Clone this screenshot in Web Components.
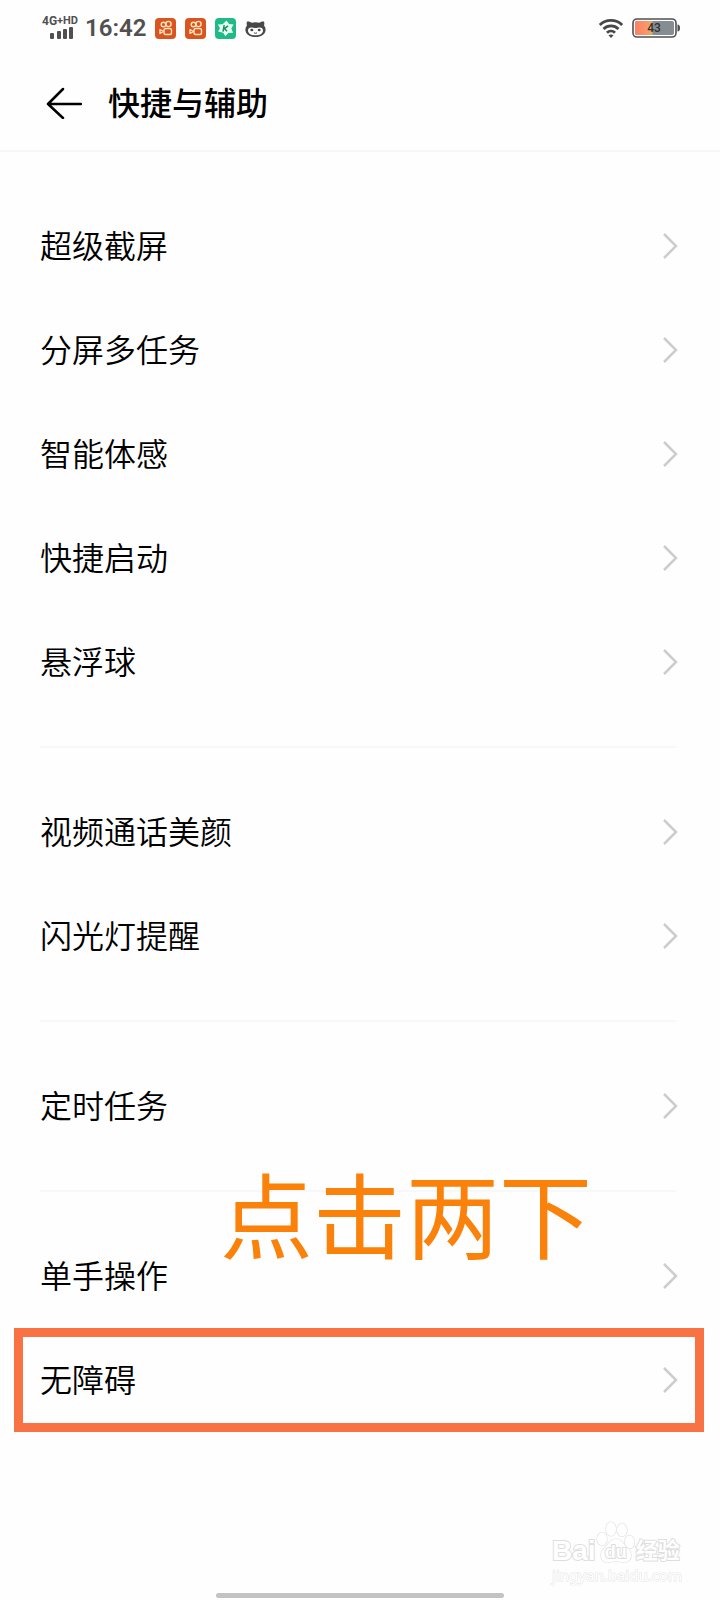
<!DOCTYPE html>
<html lang="zh-CN">
<head>
<meta charset="utf-8">
<meta name="viewport" content="width=device-width, initial-scale=1">
<title>快捷与辅助</title>
<style>
  body {
    margin: 0;
    background: #fefefe;
    color: #000;
    font-family: "Noto Sans CJK SC", sans-serif;
  }
</style>
</head>
<body>
<settings-screen>
  <status-bar slot="status" time="16:42" battery="43"></status-bar>
  <title-bar slot="header">快捷与辅助</title-bar>

  <settings-group>
    <settings-row>超级截屏</settings-row>
    <settings-row>分屏多任务</settings-row>
    <settings-row>智能体感</settings-row>
    <settings-row>快捷启动</settings-row>
    <settings-row>悬浮球</settings-row>
  </settings-group>
  <settings-group>
    <settings-row>视频通话美颜</settings-row>
    <settings-row>闪光灯提醒</settings-row>
  </settings-group>
  <settings-group>
    <settings-row>定时任务</settings-row>
  </settings-group>
  <settings-group>
    <hint-note slot="note">点击两下</hint-note>
    <settings-row>单手操作</settings-row>
    <settings-row highlighted>无障碍</settings-row>
  </settings-group>

  <site-watermark slot="overlay"></site-watermark>
</settings-screen>

<script>
class SettingsScreen extends HTMLElement {
  constructor() {
    super();
    this.attachShadow({ mode: 'open' });
  }

  connectedCallback() {
    this.shadowRoot.innerHTML = `
      <style>
        :host {
          display: flex;
          flex-direction: column;
          position: relative;
          min-height: 100vh;
        }
        main { padding-top: 10px; }
        .home {
          width: 40%;
          height: 5px;
          margin: auto auto 2px;
          border-radius: 3px;
          background: #c3c3c3;
        }
      </style>
      <slot name="status"></slot>
      <slot name="header"></slot>
      <main><slot></slot></main>
      <slot name="overlay"></slot>
      <div class="home"></div>
    `;
  }
}

class StatusBar extends HTMLElement {
  constructor() {
    super();
    this.attachShadow({ mode: 'open' });
  }

  connectedCallback() {
    const time = this.getAttribute('time') || '';
    const battery = this.getAttribute('battery') || '0';

    // Both short-video apps use the same camera glyph
    const camera = `
      <svg width="21" height="21" viewBox="0 0 21 21">
        <rect width="21" height="21" rx="4" fill="#d9541e"/>
        <g fill="none" stroke="#ffe3bd" stroke-width="1.4">
          <circle cx="8.5" cy="6.500" r="2.300"/>
          <circle cx="13.500" cy="6" r="2.600"/>
          <rect x="9" y="10.500" width="7.500" height="6" rx="1.800"/>
          <path d="M8.500 13.500 5 11.500v4z" stroke-linejoin="round"/>
        </g>
      </svg>`;

    this.shadowRoot.innerHTML = `
      <style>
        :host {
          display: flex;
          align-items: center;
          justify-content: space-between;
          height: 56px;
          padding: 0 40px 0 42px;
          color: #505050;
          font-family: Roboto, sans-serif;
        }
        .side { display: flex; align-items: center; }
        .left { gap: 9px; }
        .right { gap: 8px; }
        .network { width: 34px; font-size: 12px; line-height: 12px; font-weight: 700; white-space: nowrap; }
        .network sup { font-size: 11px; line-height: 0; vertical-align: 1px; }
        .network svg { display: block; margin: 0 0 2px 8px; }
        time { font-size: 24px; line-height: 28px; font-weight: 600; }
        svg { display: block; }
        .battery { display: grid; align-items: center; }
        .battery > * { grid-area: 1 / 1; }
        .level { width: 44px; text-align: center; font-size: 12px; line-height: 20px; font-weight: 500; color: #33302e; }
      </style>
      <div class="side left">
        <div class="network">
          4G<sup>+HD</sup>
          <svg width="25" height="12" viewBox="0 0 25 12" fill="#505050">
            <rect x="0" y="6" width="4" height="6" rx="1"/>
            <rect x="7" y="4" width="4" height="8" rx="1"/>
            <rect x="13" y="2" width="4" height="10" rx="1"/>
            <rect x="19" y="0" width="4" height="12" rx="1"/>
          </svg>
        </div>
        <time>${time}</time>
        ${camera}
        ${camera}
        <svg width="21" height="21" viewBox="0 0 21 21">
          <rect width="21" height="21" rx="4" fill="#1fba87"/>
          <path d="M11.500 2.500 14 6l4.500.5-2.200 4 1.800 4.200-4.800.3-3 3.300-2.100-3.600L3 13.500l2-3.300L2.800 6.500l4.900-.3z" fill="#e4fff0"/>
          <path d="M9.200 7.200 8 13.600M13 7.800 9.500 10.600l2.500 2.600" fill="none" stroke="#168c67" stroke-width="1.500"/>
        </svg>
        <svg width="21" height="21" viewBox="0 0 21 21">
          <path d="M2 3.500c1.700-.2 3.300.4 4.600 1.200 2.500-.7 5.300-.7 7.800 0C15.700 3.900 17.300 3.300 19 3.500c.5 1.500.4 2.700 0 4 1.100 1.400 1.600 2.800 1.600 4.200 0 4.500-4.400 7.300-10.100 7.300S.4 16.200.4 11.700c0-1.400.5-2.800 1.600-4.200-.4-1.300-.5-2.500 0-4z" fill="#484848"/>
          <path d="M3 12.400c0-2 1.300-3 3.200-3 1.600 0 2.900.6 4.300.6s2.700-.6 4.300-.6c1.900 0 3.200 1 3.200 3 0 3.200-3.400 4.900-7.500 4.900S3 15.600 3 12.400z" fill="#fdfdfd"/>
          <ellipse cx="6.800" cy="12" rx="1.500" ry="1.200" fill="#484848"/>
          <ellipse cx="14.200" cy="12" rx="1.500" ry="1.200" fill="#484848"/>
          <path d="M9 14.800q1.500 1 3 0" fill="none" stroke="#484848"/>
        </svg>
      </div>
      <div class="side right">
        <svg width="26" height="21" viewBox="0 0 26 21" fill="none" stroke="#474747" stroke-width="2.800">
          <path d="M1.800 7a16 16 0 0 1 22.400 0M5.500 11a10.700 10.700 0 0 1 15 0M9 14.800a5.800 5.800 0 0 1 8 0"/>
          <path d="M10.500 17.200q2.500-1.600 5 0L13 20z" fill="#474747" stroke="none"/>
        </svg>
        <div class="battery">
          <svg width="48" height="20" viewBox="0 0 48 20">
            <defs>
              <linearGradient id="charge">
                <stop offset="0" stop-color="#ff7d64"/>
                <stop offset=".7" stop-color="#f59a6b"/>
                <stop offset="1" stop-color="#d8b35d"/>
              </linearGradient>
            </defs>
            <rect x="1" y="1" width="43" height="18" rx="4" fill="#fff" stroke="#505050" stroke-width="1.600"/>
            <rect x="3" y="3" width="39" height="14" rx="2" fill="#858d92"/>
            <path d="M5 3h15.500v14H5a2 2 0 0 1-2-2V5a2 2 0 0 1 2-2z" fill="url(#charge)"/>
            <path d="M45.500 6.500q2.500 0 2.500 3.500t-2.500 3.500z" fill="#505050"/>
          </svg>
          <span class="level">${battery}</span>
        </div>
      </div>
    `;
  }
}

class TitleBar extends HTMLElement {
  constructor() {
    super();
    this.attachShadow({ mode: 'open' });
  }

  connectedCallback() {
    this.shadowRoot.innerHTML = `
      <style>
        :host {
          display: flex;
          align-items: center;
          gap: 26px;
          box-sizing: border-box;
          height: 96px;
          padding: 0 46px;
          border-bottom: 2px solid #f7f7f7;
        }
        button { padding: 0; border: 0; background: none; color: inherit; }
        svg { display: block; }
        h1 { margin: 0; padding-bottom: 4px; font-size: 32px; line-height: 48px; font-weight: 500; }
      </style>
      <button type="button" aria-label="返回">
        <svg width="36" height="32" viewBox="0 0 36 32" fill="none" stroke="currentColor" stroke-width="2.500" stroke-linecap="round" stroke-linejoin="round">
          <path d="M17 2 2 17l15 14M2 17h33"/>
        </svg>
      </button>
      <h1><slot></slot></h1>
    `;
  }
}

class SettingsGroup extends HTMLElement {
  constructor() {
    super();
    this.attachShadow({ mode: 'open' });
  }

  connectedCallback() {
    this.shadowRoot.innerHTML = `
      <style>
        :host { display: block; position: relative; padding: 32px 0; }
        :host(:not(:first-of-type))::before {
          content: "";
          display: block;
          height: 2px;
          margin: -32px 44px 32px 40px;
          background: #f8f8f8;
        }
      </style>
      <slot></slot>
      <slot name="note"></slot>
    `;
  }
}

class SettingsRow extends HTMLElement {
  constructor() {
    super();
    this.attachShadow({ mode: 'open' });
  }

  connectedCallback() {
    this.shadowRoot.innerHTML = `
      <style>
        :host { display: block; }
        a {
          display: flex;
          align-items: center;
          justify-content: space-between;
          box-sizing: border-box;
          height: 104px;
          margin: 0 16px 0 14px;
          padding: 0 26px;
          color: inherit;
          font-size: 32px;
          line-height: 48px;
          font-weight: 350;
          text-decoration: none;
        }
        span { padding-bottom: 4px; }
        :host([highlighted]) a {
          padding: 0 17px;
          border: 9px solid #f87244;
        }
      </style>
      <a href="#">
        <span><slot></slot></span>
        <svg width="16" height="26" viewBox="0 0 16 26" fill="none" stroke="#cdcdcd" stroke-width="2.500">
          <path d="M2 1l12 12L2 25"/>
        </svg>
      </a>
    `;
  }
}

// Large callout floating over the list
class HintNote extends HTMLElement {
  constructor() {
    super();
    this.attachShadow({ mode: 'open' });
  }

  connectedCallback() {
    this.shadowRoot.innerHTML = `
      <style>
        :host {
          position: absolute;
          top: -25px;
          left: 220px;
          color: #fa820a;
          font-size: 93px;
          line-height: 93px;
          white-space: nowrap;
          pointer-events: none;
        }
      </style>
      <slot></slot>
    `;
  }
}

class SiteWatermark extends HTMLElement {
  constructor() {
    super();
    this.attachShadow({ mode: 'open' });
  }

  connectedCallback() {
    this.shadowRoot.innerHTML = `
      <style>
        :host {
          position: absolute;
          right: 38px;
          bottom: 16px;
          color: #fff;
          font-family: "Liberation Sans", "Noto Sans CJK SC", sans-serif;
          font-weight: 700;
          paint-order: stroke fill;
          -webkit-text-stroke: 2px #dedede;
        }
        .logo { display: flex; align-items: flex-end; }
        .bai { font-size: 28px; line-height: 30px; }
        .paw { display: grid; justify-items: center; align-items: end; }
        .paw > * { grid-area: 1 / 1; }
        .du { font-size: 18px; line-height: 28px; }
        .name { font-size: 22px; line-height: 30px; }
        .site {
          font-family: "Noto Sans", sans-serif;
          font-size: 15px;
          line-height: 18px;
          font-weight: 400;
          -webkit-text-stroke: 1px #e4e4e4;
        }
        svg { display: block; }
      </style>
      <div class="logo">
        <span class="bai">Bai</span>
        <span class="paw">
          <svg width="40" height="46" viewBox="0 0 40 46" fill="#fff" stroke="#dedede" stroke-width="1.200">
            <ellipse cx="6" cy="19" rx="5" ry="6.500"/>
            <ellipse cx="15" cy="9" rx="5" ry="7"/>
            <ellipse cx="26" cy="10" rx="5" ry="6.500"/>
            <ellipse cx="33.500" cy="22" rx="5" ry="6.500"/>
            <path d="M20 19c4 0 6 2 8 5s7 6 7 11c0 6-4 8-9 7-4-1-8-1-12 0-5 1-9-1-9-7 0-5 5-8 7-11s4-5 8-5z"/>
          </svg>
          <span class="du">du</span>
        </span>
        <span class="name">经验</span>
      </div>
      <div class="site">jingyan.baidu.com</div>
    `;
  }
}

customElements.define('status-bar', StatusBar);
customElements.define('title-bar', TitleBar);
customElements.define('settings-row', SettingsRow);
customElements.define('settings-group', SettingsGroup);
customElements.define('hint-note', HintNote);
customElements.define('site-watermark', SiteWatermark);
customElements.define('settings-screen', SettingsScreen);
</script>
</body>
</html>
